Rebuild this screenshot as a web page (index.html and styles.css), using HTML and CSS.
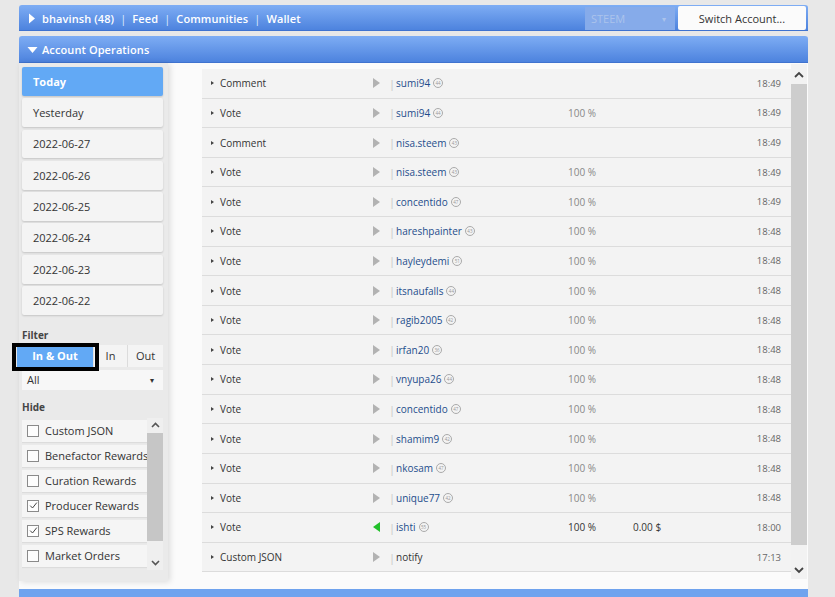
FILE: index.html
```html
<!DOCTYPE html>
<html>
<head>
<meta charset="utf-8">
<link rel="stylesheet" href="styles.css">
</head>
<body>
<div class="app">
  <div class="bar top">
    <svg class="tri" width="8" height="11" viewBox="0 0 8 11"><path d="M1 0.5 L7 5.5 L1 10.5 Z" fill="#fff"/></svg>
    <span class="nav">bhavinsh (48)<span class="sep">|</span>Feed<span class="sep">|</span>Communities<span class="sep">|</span>Wallet</span>
    <span class="grow"></span>
    <div class="coin"><span>STEEM</span><span class="caret">▾</span></div>
    <div class="switch">Switch Account...</div>
  </div>
  <div class="bar sec">
    <svg class="tri down" width="11" height="8" viewBox="0 0 11 8"><path d="M0.5 1 L10.5 1 L5.5 7 Z" fill="#fff"/></svg>
    <span class="nav">Account Operations</span>
  </div>
  <div class="content">
    <aside class="side">
      <div class="day active">Today</div>
      <div class="day">Yesterday</div>
      <div class="day">2022-06-27</div>
      <div class="day">2022-06-26</div>
      <div class="day">2022-06-25</div>
      <div class="day">2022-06-24</div>
      <div class="day">2022-06-23</div>
      <div class="day">2022-06-22</div>
      <div class="label lf">Filter</div>
      <div class="filters">
        <div class="fb on">In &amp; Out<span class="mark"></span></div>
        <div class="fb in">In</div>
        <div class="fb out">Out</div>
      </div>
      <div class="sel"><span>All</span><span class="caret">▾</span></div>
      <div class="label lh">Hide</div>
      <div class="hide">
        <div class="checks">
          <div class="chk"><span class="box"></span>Custom JSON</div>
          <div class="chk"><span class="box"></span>Benefactor Rewards</div>
          <div class="chk"><span class="box"></span>Curation Rewards</div>
          <div class="chk"><span class="box on"><svg width="9" height="9" viewBox="0 0 9 9"><path d="M1.2 4.6 L3.5 7 L7.8 1.6" fill="none" stroke="#444" stroke-width="1"/></svg></span>Producer Rewards</div>
          <div class="chk"><span class="box on"><svg width="9" height="9" viewBox="0 0 9 9"><path d="M1.2 4.6 L3.5 7 L7.8 1.6" fill="none" stroke="#444" stroke-width="1"/></svg></span>SPS Rewards</div>
          <div class="chk"><span class="box"></span>Market Orders</div>
        </div>
        <div class="sscroll">
          <div class="arr"><svg width="9" height="6" viewBox="0 0 9 6"><path d="M1 5 L4.5 1.5 L8 5" fill="none" stroke="#555" stroke-width="1.6"/></svg></div>
          <div class="thumb small"></div>
          <div class="rest"><svg width="9" height="6" viewBox="0 0 9 6"><path d="M1 1 L4.5 4.5 L8 1" fill="none" stroke="#555" stroke-width="1.6"/></svg></div>
        </div>
      </div>
    </aside>
    <main class="ops">
      <div class="list">
        <div class="row"><i class="c"></i><span class="t">Comment</span><i class="p"></i><span class="b">|</span><span class="n">sumi94<b class="r">44</b></span><span class="v"></span><span class="v"></span><span class="tm">18:49</span></div>
        <div class="row"><i class="c"></i><span class="t">Vote</span><i class="p"></i><span class="b">|</span><span class="n">sumi94<b class="r">44</b></span><span class="v">100 %</span><span class="v"></span><span class="tm">18:49</span></div>
        <div class="row"><i class="c"></i><span class="t">Comment</span><i class="p"></i><span class="b">|</span><span class="n">nisa.steem<b class="r">43</b></span><span class="v"></span><span class="v"></span><span class="tm">18:49</span></div>
        <div class="row"><i class="c"></i><span class="t">Vote</span><i class="p"></i><span class="b">|</span><span class="n">nisa.steem<b class="r">43</b></span><span class="v">100 %</span><span class="v"></span><span class="tm">18:49</span></div>
        <div class="row"><i class="c"></i><span class="t">Vote</span><i class="p"></i><span class="b">|</span><span class="n">concentido<b class="r">47</b></span><span class="v">100 %</span><span class="v"></span><span class="tm">18:49</span></div>
        <div class="row"><i class="c"></i><span class="t">Vote</span><i class="p"></i><span class="b">|</span><span class="n">hareshpainter<b class="r">43</b></span><span class="v">100 %</span><span class="v"></span><span class="tm">18:48</span></div>
        <div class="row"><i class="c"></i><span class="t">Vote</span><i class="p"></i><span class="b">|</span><span class="n">hayleydemi<b class="r">51</b></span><span class="v">100 %</span><span class="v"></span><span class="tm">18:48</span></div>
        <div class="row"><i class="c"></i><span class="t">Vote</span><i class="p"></i><span class="b">|</span><span class="n">itsnaufalls<b class="r">44</b></span><span class="v">100 %</span><span class="v"></span><span class="tm">18:48</span></div>
        <div class="row"><i class="c"></i><span class="t">Vote</span><i class="p"></i><span class="b">|</span><span class="n">ragib2005<b class="r">42</b></span><span class="v">100 %</span><span class="v"></span><span class="tm">18:48</span></div>
        <div class="row"><i class="c"></i><span class="t">Vote</span><i class="p"></i><span class="b">|</span><span class="n">irfan20<b class="r">36</b></span><span class="v">100 %</span><span class="v"></span><span class="tm">18:48</span></div>
        <div class="row"><i class="c"></i><span class="t">Vote</span><i class="p"></i><span class="b">|</span><span class="n">vnyupa26<b class="r">44</b></span><span class="v">100 %</span><span class="v"></span><span class="tm">18:48</span></div>
        <div class="row"><i class="c"></i><span class="t">Vote</span><i class="p"></i><span class="b">|</span><span class="n">concentido<b class="r">47</b></span><span class="v">100 %</span><span class="v"></span><span class="tm">18:48</span></div>
        <div class="row"><i class="c"></i><span class="t">Vote</span><i class="p"></i><span class="b">|</span><span class="n">shamim9<b class="r">42</b></span><span class="v">100 %</span><span class="v"></span><span class="tm">18:48</span></div>
        <div class="row"><i class="c"></i><span class="t">Vote</span><i class="p"></i><span class="b">|</span><span class="n">nkosam<b class="r">47</b></span><span class="v">100 %</span><span class="v"></span><span class="tm">18:48</span></div>
        <div class="row"><i class="c"></i><span class="t">Vote</span><i class="p"></i><span class="b">|</span><span class="n">unique77<b class="r">42</b></span><span class="v">100 %</span><span class="v"></span><span class="tm">18:48</span></div>
        <div class="row"><i class="c"></i><span class="t">Vote</span><i class="p in"></i><span class="b">|</span><span class="n">ishti<b class="r">55</b></span><span class="v dark">100 %</span><span class="v dark">0.00 $</span><span class="tm">18:00</span></div>
        <div class="row"><i class="c"></i><span class="t">Custom JSON</span><i class="p"></i><span class="b">|</span><span class="n plain">notify</span><span class="v"></span><span class="v"></span><span class="tm">17:13</span></div>
      </div>
      <div class="vscroll">
        <div class="arr"><svg width="10" height="7" viewBox="0 0 10 7"><path d="M1 6 L5 2 L9 6" fill="none" stroke="#444" stroke-width="1.8"/></svg></div>
        <div class="thumb"></div>
        <div class="rest"><svg width="10" height="7" viewBox="0 0 10 7"><path d="M1 1 L5 5 L9 1" fill="none" stroke="#444" stroke-width="1.8"/></svg></div>
      </div>
    </main>
  </div>
  <div class="bar foot"></div>
</div>
</body>
</html>
```

FILE: styles.css
```css
* { box-sizing: border-box; }
html, body { margin: 0; padding: 0; }
body {
  background: #e8e8e8;
  font-family: "Open Sans", "Noto Sans", sans-serif;
  color: #333;
  width: 835px;
  height: 597px;
  overflow: hidden;
}
.app {
  width: 789px;
  margin-left: 19px;
  padding-top: 5px;
}
.bar {
  display: flex;
  align-items: center;
  background: linear-gradient(#7eadf4, #4b81dd);
  border-radius: 3px 3px 0 0;
  box-shadow: inset 0 -1px 0 #3f73cf;
  color: #fff;
}
.top { height: 26px; padding-left: 9px; }
.sec { height: 27px; margin-top: 5px; padding-left: 8px; }
.tri { flex: none; margin-right: 6px; }
.tri.down { margin-right: 4px; margin-top: 1px; }
.nav { font-size: 11px; font-weight: 600; letter-spacing: 0.1px; }
.sep { margin: 0 6px; font-weight: 400; color: #dfe9fb; }
.grow { flex: 1; }
.coin {
  width: 90px;
  height: 23px;
  margin-right: 3px;
  background: #86abea;
  display: flex;
  align-items: center;
  justify-content: space-between;
  padding: 0 9px 0 6px;
  color: #abc3ec;
  font-size: 11px;
}
.coin .caret, .sel .caret { font-size: 8px; }
.switch {
  width: 128px;
  height: 24px;
  margin-right: 2px;
  background: #fbfbfb;
  border-radius: 2px;
  color: #333;
  font-size: 11px;
  display: flex;
  align-items: center;
  justify-content: center;
}
.content {
  display: flex;
  height: 526px;
  background: #fbfbfb;
}
.side {
  position: relative;
  width: 149px;
  height: 518px;
  background: #eaeaea;
  box-shadow: 2px 1px 6px rgba(0,0,0,0.13);
  padding: 4px 0 0 3px;
  flex: none;
}
.day {
  width: 141px;
  height: 28.8px;
  margin-bottom: 2.5px;
  background: #f4f4f4;
  box-shadow: 0 1px 2px rgba(0,0,0,0.16);
  border-radius: 2px;
  padding-left: 11px;
  display: flex;
  align-items: center;
  font-size: 11px;
  color: #333;
}
.day.active {
  background: #62a9f5;
  color: #fff;
  font-weight: 700;
}
.label {
  font-size: 10px;
  font-weight: 700;
  color: #444;
  height: 14px;
  line-height: 14px;
}
.lf { margin-top: 13px; }
.filters {
  display: flex;
  height: 22px;
  margin-top: 3px;
  margin-left: -5px;
  width: 146px;
}
.fb {
  position: relative;
  display: flex;
  align-items: center;
  justify-content: center;
  font-size: 11px;
  background: #f4f4f4;
  color: #333;
}
.fb.on {
  width: 76px;
  background: #62a9f5;
  color: #fff;
  font-weight: 700;
  z-index: 2;
}
.fb.in { width: 34px; border-left: 1px solid #e0e0e0; }
.fb.out { width: 36px; border-left: 1px solid #dcdcdc; }
.mark {
  position: absolute;
  left: -5px;
  top: -2px;
  width: 87px;
  height: 28px;
  border: 4px solid #000;
  z-index: 3;
}
.sel {
  width: 141px;
  height: 20px;
  margin-top: 3px;
  background: #f7f7f7;
  display: flex;
  align-items: center;
  justify-content: space-between;
  padding: 0 9px 0 5px;
  font-size: 11px;
  color: #333;
}
.lh { margin-top: 10px; }
.hide {
  display: flex;
  margin-top: 4px;
  height: 152px;
}
.checks {
  width: 125px;
  padding-top: 2px;
  overflow: hidden;
}
.chk {
  height: 22px;
  margin-bottom: 3px;
  background: #f5f5f5;
  display: flex;
  align-items: center;
  padding-left: 5px;
  font-size: 11px;
  color: #333;
  white-space: nowrap;
  box-shadow: 0 1px 1px rgba(0,0,0,0.06);
}
.box {
  width: 12px;
  height: 12px;
  border: 1px solid #8a8a8a;
  background: #fdfdfd;
  margin-right: 6px;
  flex: none;
  display: flex;
  align-items: center;
  justify-content: center;
}
.sscroll {
  width: 16px;
  display: flex;
  flex-direction: column;
  background: #efefef;
}
.sscroll .arr { height: 15px; display: flex; align-items: center; justify-content: center; }
.thumb.small { height: 108px; background: #c6c6c6; }
.sscroll .rest { flex: 1; display: flex; align-items: flex-end; justify-content: center; padding-bottom: 4px; }
.ops {
  display: flex;
  margin-left: 34px;
  padding-top: 6px;
}
.list { width: 589px; }
.row {
  display: grid;
  grid-template-columns: 9px 153px 16px 7px 172px 65px 1fr auto;
  align-items: center;
  height: 29.62px;
  padding: 0 10px 0 9px;
  background: #f3f3f3;
  border-bottom: 1px solid #dcdcdc;
  font-size: 10px;
  color: #333;
}
.c {
  width: 0; height: 0;
  border-left: 3px solid #444;
  border-top: 2.5px solid transparent;
  border-bottom: 2.5px solid transparent;
}
.p {
  width: 0; height: 0;
  border-left: 7px solid #b2b2b2;
  border-top: 5px solid transparent;
  border-bottom: 5px solid transparent;
}
.p.in {
  border-left: 0;
  border-right: 7px solid #22c02a;
}
.b { color: #c8c8c8; font-size: 11px; }
.n { color: #1e4d8c; display: flex; align-items: center; }
.n.plain { color: #333; }
.r {
  font-weight: 400;
  width: 10px;
  height: 10px;
  border: 1px solid #aaa;
  border-radius: 50%;
  margin-left: 3px;
  font-size: 4.5px;
  color: #999;
  display: flex;
  align-items: center;
  justify-content: center;
}
.v { color: #888; }
.v.dark { color: #333; }
.tm { color: #666; font-size: 9.5px; }
.vscroll {
  width: 16px;
  height: 515px;
  margin-top: -5px;
  display: flex;
  flex-direction: column;
  background: #f2f2f2;
}
.vscroll .arr { height: 20px; display: flex; align-items: center; justify-content: center; }
.vscroll .thumb { height: 461px; background: #cdcdcd; }
.vscroll .rest { flex: 1; display: flex; align-items: flex-end; justify-content: center; padding-bottom: 5px; }
.foot { height: 20px; border-radius: 0; background: #6fa3ee; }
```
